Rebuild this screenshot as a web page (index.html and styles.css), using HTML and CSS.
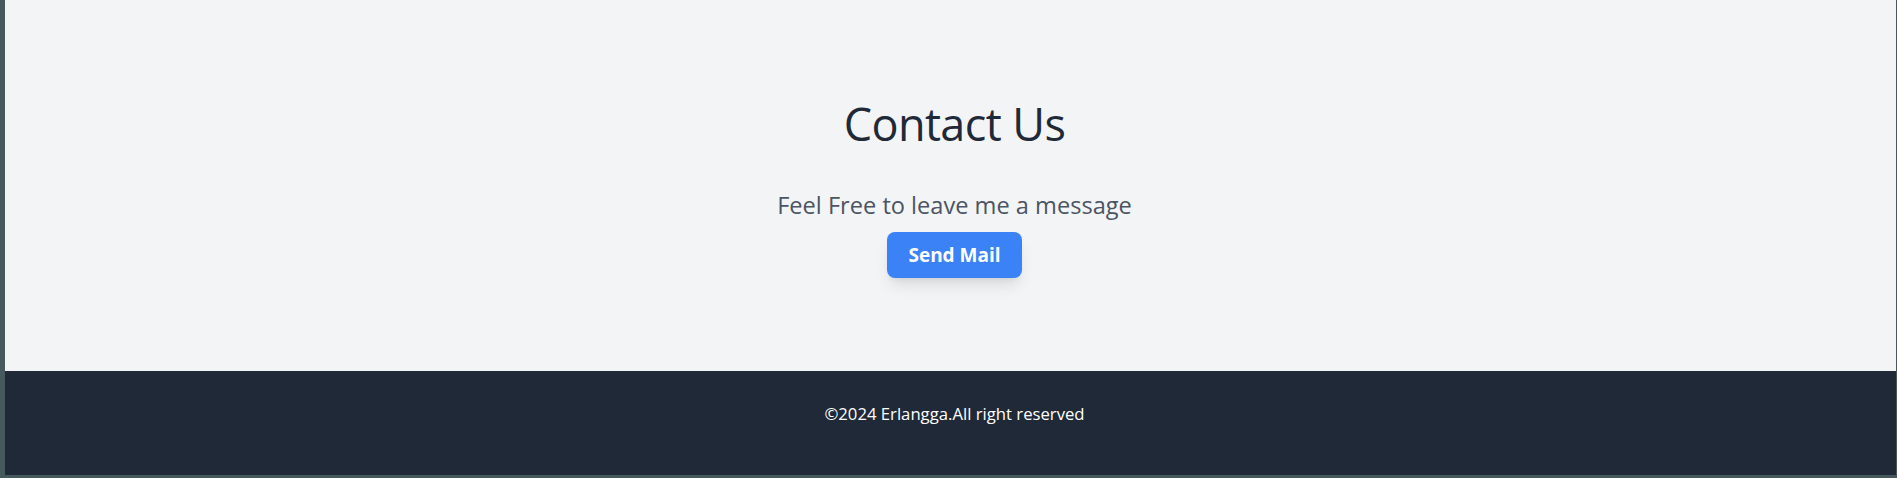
FILE: index.html
```html
<!DOCTYPE html>
<html lang="en">
<head>
<meta charset="utf-8">
<title>Contact Us</title>
<link rel="stylesheet" href="styles.css">
</head>
<body>
  <div class="window">
    <main class="contact">
      <h1 class="contact-title">Contact Us</h1>
      <p class="contact-text">Feel Free to leave me a message</p>
      <a class="contact-button" href="#">Send Mail</a>
    </main>
    <footer class="footer">
      <p class="footer-text">©2024 Erlangga.All right reserved</p>
    </footer>
  </div>
</body>
</html>
```
FILE: styles.css
```css
html, body {
  margin: 0;
  padding: 0;
}

body {
  background: #465a5d;
  font-family: "Open Sans", "Noto Sans", sans-serif;
  height: 478px;
  overflow: hidden;
}

.window {
  margin: 0 1px 0 5px;
  display: flex;
  flex-direction: column;
}

.contact {
  background: #f3f4f6;
  height: 371px;
  box-sizing: border-box;
  padding: 100px 0 0 8px;
  display: flex;
  flex-direction: column;
  align-items: center;
}

.contact-title {
  margin: 0;
  font-size: 45px;
  line-height: 48px;
  font-weight: 400;
  color: #1f2937;
  letter-spacing: -0.6px;
}

.contact-text {
  margin: 41px 0 0;
  font-size: 23.6px;
  line-height: 32px;
  color: #4b5563;
}

.contact-button {
  margin-top: 11px;
  display: block;
  background: #3b82f6;
  color: #ffffff;
  text-decoration: none;
  font-weight: 700;
  font-size: 19px;
  line-height: 46px;
  height: 46px;
  padding: 0 21px;
  border-radius: 8px;
  box-shadow: 0 10px 15px -3px rgba(0, 0, 0, 0.1), 0 4px 6px -4px rgba(0, 0, 0, 0.1);
}

.footer {
  background: #1f2937;
  height: 104px;
  box-sizing: border-box;
  padding: 31px 0 0 8px;
  display: flex;
  justify-content: center;
}

.footer-text {
  margin: 0;
  color: #ffffff;
  font-size: 16.7px;
  line-height: 24px;
}
```
